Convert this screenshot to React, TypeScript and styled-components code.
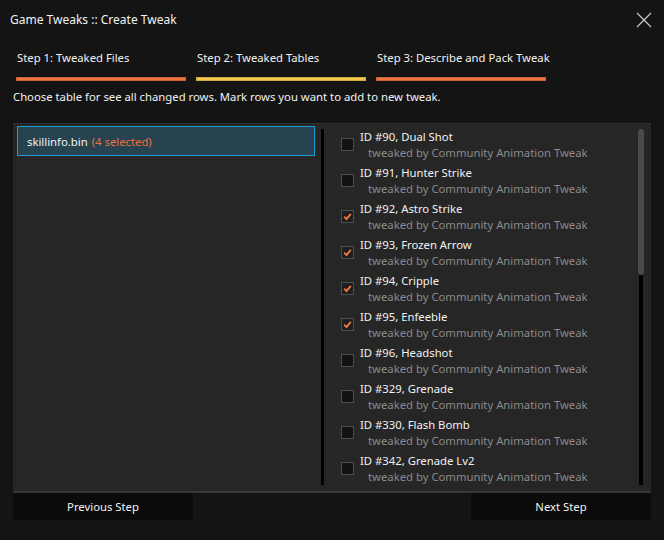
import React from "react";
import styled, { createGlobalStyle } from "styled-components";

const GlobalStyle = createGlobalStyle`
  html, body {
    margin: 0;
    padding: 0;
    background: #141414;
  }
  body {
    font-family: "Noto Sans", "Open Sans", sans-serif;
    color: #f2f2f2;
  }
`;

const Window = styled.div`
  width: 664px;
  height: 540px;
  background: #141414;
  display: flex;
  flex-direction: column;
  overflow: hidden;
`;

const TitleBar = styled.div`
  height: 38px;
  display: flex;
  align-items: center;
  justify-content: space-between;
  padding: 0 12px 0 10px;
  font-size: 12px;
`;

const CloseButton = styled.div`
  width: 16px;
  height: 16px;
  display: flex;
  margin-top: 2px;
`;

const Steps = styled.div`
  display: flex;
  gap: 10px;
  padding: 12px 0 0 16px;
`;

const Step = styled.div`
  width: 170px;
  display: flex;
  flex-direction: column;
`;

const StepLabel = styled.div`
  font-size: 11.3px;
  line-height: 16px;
  padding-left: 1px;
  white-space: nowrap;
`;

const StepBar = styled.div<{ $color: string }>`
  height: 4px;
  margin-top: 11px;
  background: ${(p) => p.$color};
  box-shadow: inset 0 0 0 1px rgba(0, 0, 0, 0.15);
`;

const Hint = styled.div`
  font-size: 11.3px;
  line-height: 16px;
  margin: 8px 0 0 13px;
  white-space: nowrap;
`;

const Panel = styled.div`
  margin: 18px 13px 0;
  height: 367px;
  background: #262626;
  border-top: 1px solid #303030;
  border-bottom: 2px solid #383838;
  display: flex;
`;

const LeftPane = styled.div`
  width: 306px;
  padding: 2px 4px;
  box-sizing: border-box;
`;

const FileItem = styled.div`
  height: 30px;
  box-sizing: border-box;
  border: 1px solid #1e9ad6;
  background: #26434f;
  display: flex;
  align-items: center;
  padding-left: 9px;
  font-size: 11.3px;
`;

const Count = styled.span`
  color: #ee6f3d;
  margin-left: 4px;
`;

const Divider = styled.div`
  width: 3px;
  margin: 5px 0 6px 2px;
  background: #000;
`;

const RightPane = styled.div`
  flex: 1;
  display: flex;
  padding: 5px 7px 0 17px;
  min-width: 0;
`;

const List = styled.div`
  flex: 1;
  overflow: hidden;
`;

const Row = styled.div`
  height: 36px;
  display: flex;
`;

const Check = styled.div<{ $checked: boolean }>`
  width: 13px;
  height: 13px;
  flex-shrink: 0;
  box-sizing: border-box;
  border: 1px solid #4e4e4e;
  background: ${(p) => (p.$checked ? "#1e1e1e" : "#121212")};
  margin: 9px 6px 0 0;
  display: flex;
  align-items: center;
  justify-content: center;
`;

const RowText = styled.div`
  display: flex;
  flex-direction: column;
  white-space: nowrap;
`;

const RowTitle = styled.div`
  font-size: 11.3px;
  line-height: 16px;
`;

const RowSub = styled.div`
  font-size: 11.3px;
  line-height: 16px;
  color: #8a8a8a;
  padding-left: 8px;
`;

const ScrollTrack = styled.div`
  width: 6px;
  margin-bottom: 6px;
  display: flex;
  flex-direction: column;
  align-items: center;
`;

const ScrollThumb = styled.div`
  width: 6px;
  height: 146px;
  border-radius: 3px;
  background: #4a4a4a;
`;

const ScrollRest = styled.div`
  width: 4px;
  flex: 1;
  background: #000;
`;

const Buttons = styled.div`
  display: flex;
  justify-content: space-between;
  padding: 0 13px;
`;

const Button = styled.div`
  width: 180px;
  height: 27px;
  background: #0b0b0b;
  display: flex;
  align-items: center;
  justify-content: center;
  font-size: 11.3px;
`;

const rows = [
  { title: "ID #90, Dual Shot", checked: false },
  { title: "ID #91, Hunter Strike", checked: false },
  { title: "ID #92, Astro Strike", checked: true },
  { title: "ID #93, Frozen Arrow", checked: true },
  { title: "ID #94, Cripple", checked: true },
  { title: "ID #95, Enfeeble", checked: true },
  { title: "ID #96, Headshot", checked: false },
  { title: "ID #329, Grenade", checked: false },
  { title: "ID #330, Flash Bomb", checked: false },
  { title: "ID #342, Grenade Lv2", checked: false },
  { title: "ID #343, Flash Bomb Lv2", checked: false },
];

const CheckMark = () => (
  <svg width="9" height="9" viewBox="0 0 9 9">
    <path d="M1.2 4.6 L3.5 7 L7.8 1.8" fill="none" stroke="#f07a3e" strokeWidth="1.9" />
  </svg>
);

export default function App() {
  return (
    <Window>
      <GlobalStyle />
      <TitleBar>
        <span>Game Tweaks :: Create Tweak</span>
        <CloseButton>
          <svg width="16" height="16" viewBox="0 0 16 16">
            <path d="M1 1 L15 15 M15 1 L1 15" stroke="#c8c8c8" strokeWidth="1.2" />
          </svg>
        </CloseButton>
      </TitleBar>

      <Steps>
        <Step>
          <StepLabel>Step 1: Tweaked Files</StepLabel>
          <StepBar $color="#f0743f" />
        </Step>
        <Step>
          <StepLabel>Step 2: Tweaked Tables</StepLabel>
          <StepBar $color="#f3c84a" />
        </Step>
        <Step>
          <StepLabel>Step 3: Describe and Pack Tweak</StepLabel>
          <StepBar $color="#f0743f" />
        </Step>
      </Steps>

      <Hint>Choose table for see all changed rows. Mark rows you want to add to new tweak.</Hint>

      <Panel>
        <LeftPane>
          <FileItem>
            skillinfo.bin<Count>(4 selected)</Count>
          </FileItem>
        </LeftPane>
        <Divider />
        <RightPane>
          <List>
            {rows.map((r) => (
              <Row key={r.title}>
                <Check $checked={r.checked}>{r.checked && <CheckMark />}</Check>
                <RowText>
                  <RowTitle>{r.title}</RowTitle>
                  <RowSub>tweaked by Community Animation Tweak</RowSub>
                </RowText>
              </Row>
            ))}
          </List>
          <ScrollTrack>
            <ScrollThumb />
            <ScrollRest />
          </ScrollTrack>
        </RightPane>
      </Panel>

      <Buttons>
        <Button>Previous Step</Button>
        <Button>Next Step</Button>
      </Buttons>
    </Window>
  );
}
